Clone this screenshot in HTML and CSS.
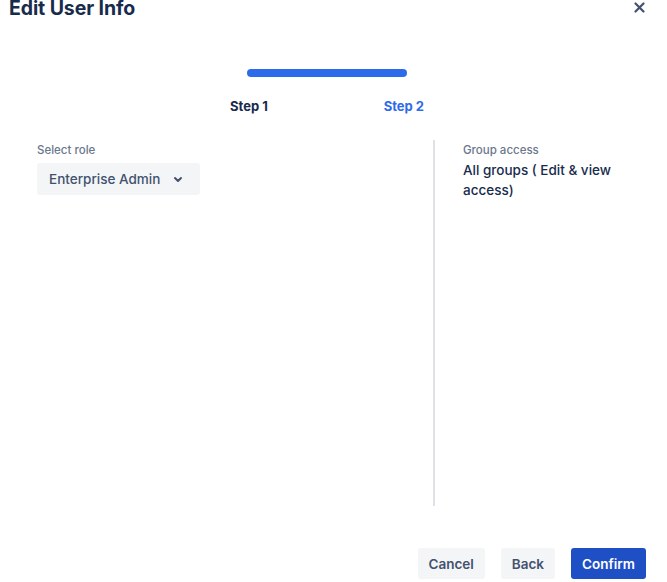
FILE: index.html
```html
<!DOCTYPE html>
<html>
<head>
<meta charset="utf-8">
<link rel="stylesheet" href="styles.css">
</head>
<body>
<div class="modal">
  <header class="header">
    <h1 class="title">Edit User Info</h1>
    <button class="close" aria-label="Close">
      <svg width="11" height="11" viewBox="0 0 11 11"><path d="M1.5 1.5L9.5 9.5M9.5 1.5L1.5 9.5" stroke="#42526E" stroke-width="2.2" stroke-linecap="round"/></svg>
    </button>
  </header>
  <div class="stepper">
    <div class="bar"></div>
    <div class="steps">
      <span class="step">Step 1</span>
      <span class="step active">Step 2</span>
    </div>
  </div>
  <main class="body">
    <section class="left">
      <div class="label">Select role</div>
      <button class="select">Enterprise Admin
        <svg width="10" height="7" viewBox="0 0 10 7"><path d="M2 2L5 5L8 2" stroke="#42526E" stroke-width="2" fill="none" stroke-linecap="round" stroke-linejoin="round"/></svg>
      </button>
    </section>
    <section class="right">
      <div class="label">Group access</div>
      <div class="value">All groups ( Edit &amp; view access)</div>
    </section>
  </main>
  <footer class="footer">
    <button class="btn">Cancel</button>
    <button class="btn">Back</button>
    <button class="btn primary">Confirm</button>
  </footer>
</div>
</body>
</html>
```
FILE: styles.css
```css
* { box-sizing: border-box; }
html, body { margin: 0; padding: 0; background: #fff; }
body { font-family: Inter, "Noto Sans", sans-serif; color: #172B4D; width: 667px; height: 582px; overflow: hidden; }
.modal { display: flex; flex-direction: column; height: 582px; }
.header { display: flex; justify-content: space-between; align-items: flex-start; padding: 0 21px 0 9px; margin-top: -3px; height: 24px; }
.title { margin: 0; font-size: 19.5px; line-height: 22px; font-weight: 700; color: #172B4D; letter-spacing: -0.1px; }
.close { border: 0; background: none; padding: 0; margin-top: 5px; width: 12px; height: 12px; display: flex; cursor: pointer; }
.stepper { width: 194px; margin: 48px 0 0 230px; }
.bar { width: 160px; height: 8px; border-radius: 4px; background: #2E6BEB; margin: 0 auto; }
.steps { display: flex; justify-content: space-between; margin-top: 21px; }
.step { font-size: 13px; line-height: 16px; font-weight: 700; color: #172B4D; }
.step.active { color: #2E6BEB; }
.body { display: flex; margin-top: 26px; height: 366px; }
.left { width: 433px; flex: none; padding: 3px 0 0 37px; }
.right { border-left: 2px solid #DFE1E6; padding: 3px 0 0 28px; width: 200px; flex: none; }
.label { font-size: 11.5px; line-height: 14px; color: #6B778C; font-weight: 500; }
.select { margin-top: 6px; width: 163px; height: 32px; border: 0; border-radius: 3px; background: #F4F5F7; font: inherit; font-size: 13.5px; color: #42526E; font-weight: 500; display: flex; align-items: center; justify-content: space-between; padding: 0 17px 0 12px; }
.value { margin-top: 3px; font-size: 13.5px; line-height: 20px; color: #172B4D; font-weight: 500; width: 160px; }
.footer { display: flex; justify-content: flex-end; gap: 16px; padding: 0 21px 0 0; margin-top: 42px; }
.btn { height: 31px; border: 0; border-radius: 3px; background: #F4F5F7; color: #42526E; font: inherit; font-size: 13.5px; font-weight: 600; padding: 0 11px; }
.btn.primary { background: #1F4FC4; color: #fff; }
```
